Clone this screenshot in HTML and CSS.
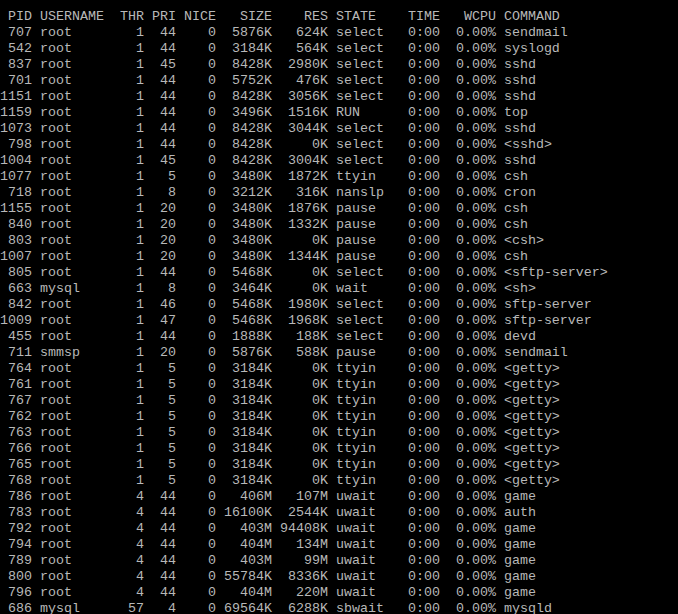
FILE: index.html
```html
<!DOCTYPE html>
<html lang="en">
<head>
<meta charset="utf-8">
<title>top</title>
<link rel="stylesheet" href="styles.css">
</head>
<body class="terminal">
<pre class="screen"> PID USERNAME  THR PRI NICE   SIZE    RES STATE    TIME   WCPU COMMAND
 707 root        1  44    0  5876K   624K select   0:00  0.00% sendmail
 542 root        1  44    0  3184K   564K select   0:00  0.00% syslogd
 837 root        1  45    0  8428K  2980K select   0:00  0.00% sshd
 701 root        1  44    0  5752K   476K select   0:00  0.00% sshd
1151 root        1  44    0  8428K  3056K select   0:00  0.00% sshd
1159 root        1  44    0  3496K  1516K RUN      0:00  0.00% top
1073 root        1  44    0  8428K  3044K select   0:00  0.00% sshd
 798 root        1  44    0  8428K     0K select   0:00  0.00% &lt;sshd&gt;
1004 root        1  45    0  8428K  3004K select   0:00  0.00% sshd
1077 root        1   5    0  3480K  1872K ttyin    0:00  0.00% csh
 718 root        1   8    0  3212K   316K nanslp   0:00  0.00% cron
1155 root        1  20    0  3480K  1876K pause    0:00  0.00% csh
 840 root        1  20    0  3480K  1332K pause    0:00  0.00% csh
 803 root        1  20    0  3480K     0K pause    0:00  0.00% &lt;csh&gt;
1007 root        1  20    0  3480K  1344K pause    0:00  0.00% csh
 805 root        1  44    0  5468K     0K select   0:00  0.00% &lt;sftp-server&gt;
 663 mysql       1   8    0  3464K     0K wait     0:00  0.00% &lt;sh&gt;
 842 root        1  46    0  5468K  1980K select   0:00  0.00% sftp-server
1009 root        1  47    0  5468K  1968K select   0:00  0.00% sftp-server
 455 root        1  44    0  1888K   188K select   0:00  0.00% devd
 711 smmsp       1  20    0  5876K   588K pause    0:00  0.00% sendmail
 764 root        1   5    0  3184K     0K ttyin    0:00  0.00% &lt;getty&gt;
 761 root        1   5    0  3184K     0K ttyin    0:00  0.00% &lt;getty&gt;
 767 root        1   5    0  3184K     0K ttyin    0:00  0.00% &lt;getty&gt;
 762 root        1   5    0  3184K     0K ttyin    0:00  0.00% &lt;getty&gt;
 763 root        1   5    0  3184K     0K ttyin    0:00  0.00% &lt;getty&gt;
 766 root        1   5    0  3184K     0K ttyin    0:00  0.00% &lt;getty&gt;
 765 root        1   5    0  3184K     0K ttyin    0:00  0.00% &lt;getty&gt;
 768 root        1   5    0  3184K     0K ttyin    0:00  0.00% &lt;getty&gt;
 786 root        4  44    0   406M   107M uwait    0:00  0.00% game
 783 root        4  44    0 16100K  2544K uwait    0:00  0.00% auth
 792 root        4  44    0   403M 94408K uwait    0:00  0.00% game
 794 root        4  44    0   404M   134M uwait    0:00  0.00% game
 789 root        4  44    0   403M    99M uwait    0:00  0.00% game
 800 root        4  44    0 55784K  8336K uwait    0:00  0.00% game
 796 root        4  44    0   404M   220M uwait    0:00  0.00% game
 686 mysql      57   4    0 69564K  6288K sbwait   0:00  0.00% mysqld</pre>
</body>
</html>
```
FILE: styles.css
```css
html, body {
  margin: 0;
  padding: 0;
  background: #000;
  height: 100%;
  overflow: hidden;
}
.terminal {
  background: #000;
}
.screen {
  margin: 0;
  padding: 9px 0 0 0;
  font-family: "Liberation Mono", "Courier New", monospace;
  font-size: 13.333px;
  line-height: 16px;
  color: #b8b8b8;
  white-space: pre;
}
```
